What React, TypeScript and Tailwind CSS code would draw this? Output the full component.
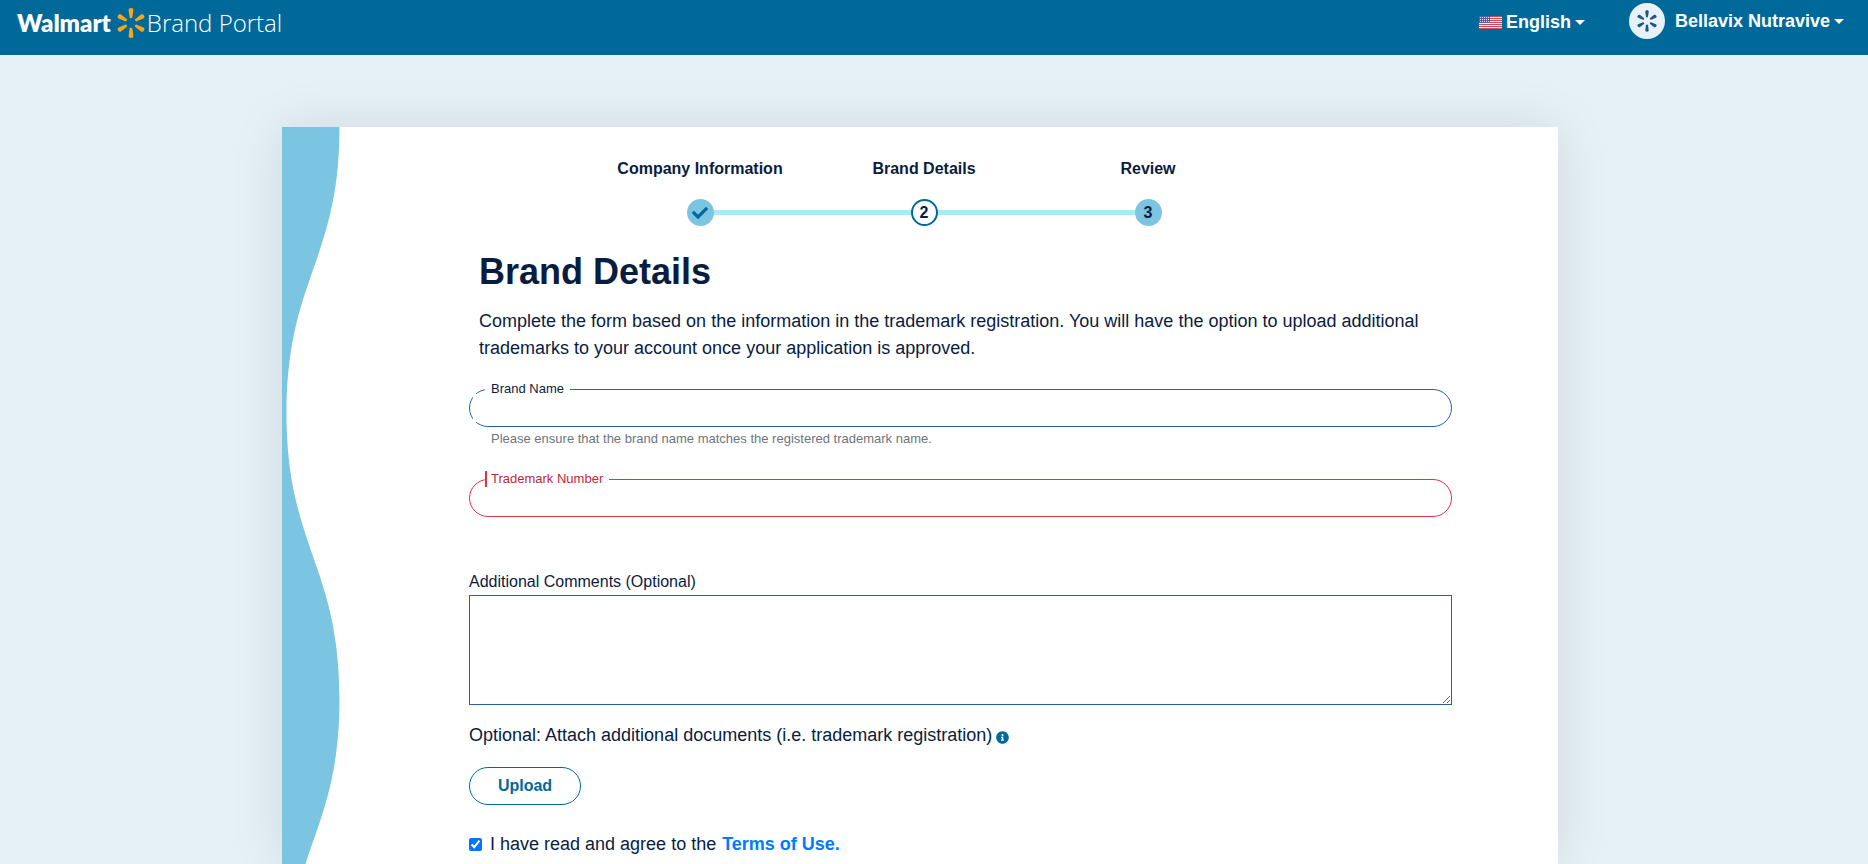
import { FaCheck, FaInfoCircle } from "react-icons/fa";

const steps = [
  { label: "Company Information", state: "done" },
  { label: "Brand Details", state: "current" },
  { label: "Review", state: "next" },
];

function Spark({ className }: { className: string }) {
  return (
    <svg viewBox="0 0 28 30" fill="currentColor" className={className} aria-hidden="true">
      {[0, 60, 120, 180, 240, 300].map((angle) => (
        <path
          key={angle}
          transform={`rotate(${angle} 14 15)`}
          d="M14 0c-1.500 0-2.500.9-2.400 2l1 7.200c.1.7.7 1 1.400 1s1.300-.3 1.400-1l1-7.200C16.500.9 15.500 0 14 0z"
        />
      ))}
    </svg>
  );
}

function Flag() {
  return (
    <svg viewBox="0 0 23 13" className="h-[13px] w-[23px]" aria-hidden="true">
      <rect width="23" height="13" fill="#f3e9ee" />
      {[0, 2, 4, 6, 8, 10, 12].map((y) => (
        <rect key={y} y={y} width="23" height="1" fill="#cf4a5f" />
      ))}
      <rect width="11" height="7" fill="#5a6296" />
      {[1, 3, 5].map((y) =>
        [1, 3, 5, 7, 9].map((x) => (
          <rect key={`${x}-${y}`} x={x} y={y} width="1" height="1" fill="#d5d7e6" />
        ))
      )}
    </svg>
  );
}

function Caret() {
  return (
    <svg viewBox="0 0 10 5" fill="currentColor" className="h-[5px] w-[10px]" aria-hidden="true">
      <path d="M0 0h10L5 5z" />
    </svg>
  );
}

function Header() {
  return (
    <header className="flex h-[55px] shrink-0 items-start justify-between bg-[#006999] pl-[17px] pr-6 text-white">
      <a href="#" className="flex h-[45px] items-center">
        <span className="font-['Lato',sans-serif] text-2xl font-extrabold">Walmart</span>
        <Spark className="ml-1.5 h-[30px] w-7 text-[#f9a61c]" />
        <span className="ml-0.5 font-['Open_Sans',sans-serif] text-2xl font-light">
          Brand Portal
        </span>
      </a>
      <div className="flex items-start text-lg font-bold leading-[27px]">
        <button className="flex h-[45px] items-center gap-1">
          <Flag />
          English
          <Caret />
        </button>
        <button className="ml-11 flex h-[42px] items-center">
          <span className="mr-2.5 flex size-9 items-center justify-center rounded-full bg-[#e6f1f8] text-[#1f5685]">
            <Spark className="h-[22px] w-5" />
          </span>
          Bellavix Nutravive
          <span className="ml-1">
            <Caret />
          </span>
        </button>
      </div>
    </header>
  );
}

function Stepper() {
  return (
    <ol className="ml-[246px] grid w-[672px] grid-cols-3 pt-[30px] text-base font-bold leading-6">
      {steps.map((step, index) => (
        <li key={step.label} className="flex flex-col items-center">
          <span>{step.label}</span>
          <span className="mt-[18px] flex w-full items-center">
            <span className={`h-[5px] flex-1 ${index > 0 ? "bg-[#aee7f6]" : ""}`} />
            <span
              className={`flex size-[27px] items-center justify-center rounded-full ${
                step.state === "current"
                  ? "border-2 border-[#006999] bg-white"
                  : "bg-[#7bc4e2]"
              }`}
            >
              {step.state === "done" ? <FaCheck className="text-[#006999]" /> : index + 1}
            </span>
            <span
              className={`h-[5px] flex-1 ${index < steps.length - 1 ? "bg-[#aee7f6]" : ""}`}
            />
          </span>
        </li>
      ))}
    </ol>
  );
}

function Wave() {
  return (
    <svg
      viewBox="0 0 58 1144"
      className="absolute left-0 top-0 h-[1144px] w-[58px] text-[#7bc4e2]"
      fill="currentColor"
      aria-hidden="true"
    >
      <path d="M0 0H57.500C57.500 134 4.500 152 4.500 286S57.500 438 57.500 572S4.500 724 4.500 858S57.500 1010 57.500 1144H0z" />
    </svg>
  );
}

export default function App() {
  return (
    <div className="flex h-screen flex-col overflow-hidden bg-[#e6f1f7] font-['Liberation_Sans',Arial,sans-serif] text-[#0a1c40]">
      <Header />
      <main className="flex flex-1 pl-[282px] pr-[310px] pt-[72px]">
        <section className="relative flex-1 bg-white shadow-[0_0_50px_rgba(0,0,0,0.1)]">
          <div className="absolute inset-0 overflow-hidden">
            <Wave />
          </div>
          <div className="relative pl-[187px] pr-[106px]">
            <div className="-ml-[187px] pl-[60px]">
              <Stepper />
            </div>
            <div className="px-2.5">
              <h1 className="mt-[21px] text-4xl font-bold leading-[50px]">Brand Details</h1>
              <p className="mt-[11px] text-lg leading-[27px]">
                Complete the form based on the information in the trademark registration. You will
                have the option to upload additional trademarks to your account once your
                application is approved.
              </p>
            </div>

            <form>
              <div className="relative mt-[27px]">
                <input
                  id="brand-name"
                  type="text"
                  className="block h-[38px] w-full rounded-full border border-[#25649b] px-5 outline-none"
                />
                <span className="absolute left-1 top-[5px] h-7 w-4 bg-white" />
                <label
                  htmlFor="brand-name"
                  className="absolute -top-2 left-4 bg-white px-1.5 text-[13px] leading-4"
                >
                  Brand Name
                </label>
              </div>
              <p className="mt-1 px-[22px] text-[13px] leading-4 text-[#6c757d]">
                Please ensure that the brand name matches the registered trademark name.
              </p>

              <div className="relative mt-8">
                <input
                  id="trademark-number"
                  type="text"
                  className="block h-[38px] w-full rounded-full border border-[#dc3545] px-5 outline-none"
                />
                <label
                  htmlFor="trademark-number"
                  className="absolute -top-2 left-4 border-l-2 border-[#dc3545] bg-white pl-1 pr-1.5 text-[13px] leading-4 text-[#c02a37]"
                >
                  Trademark Number
                </label>
              </div>

              <label htmlFor="comments" className="mt-[53px] block text-base leading-6">
                Additional Comments (Optional)
              </label>
              <textarea
                id="comments"
                className="mt-px block h-[110px] w-full resize border border-[#25649b] p-2 outline-none"
              />

              <p className="mt-[17px] flex items-center text-lg leading-[27px]">
                Optional: Attach additional documents (i.e. trademark registration)
                <FaInfoCircle className="ml-1 mt-1 size-[13px] text-[#006999]" />
              </p>
              <button
                type="button"
                className="mt-[18px] block h-[38px] w-28 rounded-full border border-[#006999] text-base font-bold text-[#006999]"
              >
                Upload
              </button>

              <div className="mt-[26px] flex items-center text-lg leading-[27px]">
                <input id="terms" type="checkbox" defaultChecked className="size-[13px] accent-[#0075ff]" />
                <label htmlFor="terms" className="ml-2">
                  I have read and agree to the
                </label>
                <a href="#" className="ml-1.5 font-bold text-[#007bff]">
                  Terms of Use.
                </a>
              </div>
            </form>
          </div>
        </section>
      </main>
    </div>
  );
}
